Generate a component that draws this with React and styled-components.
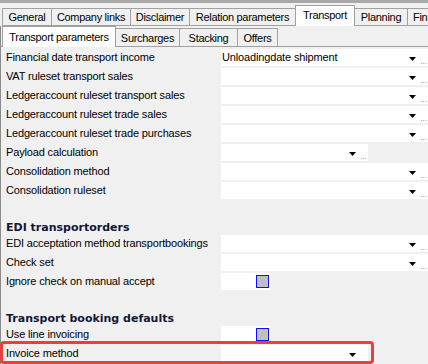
import React from 'react';
import styled, { createGlobalStyle } from 'styled-components';

const GlobalStyle = createGlobalStyle`
  html, body {
    margin: 0;
    padding: 0;
    background: #f0f0f0;
    overflow: hidden;
  }
  body {
    font-family: 'Liberation Sans', Arial, sans-serif;
    font-size: 11px;
    color: #000;
  }
`;

const mainTabs = [
  { name: 'General', width: 50 },
  { name: 'Company links', width: 80 },
  { name: 'Disclaimer', width: 60 },
  { name: 'Relation parameters', width: 107 },
  { name: 'Transport', width: 60, active: true },
  { name: 'Planning', width: 54 },
  { name: 'Financial', width: 60 },
];

const subTabs = [
  { name: 'Transport parameters', width: 114, active: true },
  { name: 'Surcharges', width: 65 },
  { name: 'Stacking', width: 59 },
  { name: 'Offers', width: 41 },
];

const transportRows = [
  { label: 'Financial date transport income', value: 'Unloadingdate shipment' },
  { label: 'VAT ruleset transport sales' },
  { label: 'Ledgeraccount ruleset transport sales' },
  { label: 'Ledgeraccount ruleset trade sales' },
  { label: 'Ledgeraccount ruleset trade purchases' },
  { label: 'Payload calculation', short: true },
  { label: 'Consolidation method' },
  { label: 'Consolidation ruleset' },
];

const Arrow = () => (
  <svg width="7" height="4" viewBox="0 0 7 4">
    <polygon points="0,0 7,0 3.5,4" fill="#000" />
  </svg>
);

const Combo = ({ value, short, noDots }) => (
  <Field $short={short}>
    <FieldText>{value}</FieldText>
    <ArrowWrap><Arrow /></ArrowWrap>
    {!noDots && <Dots>...</Dots>}
  </Field>
);

const Check = () => (
  <CheckField>
    <CheckBox />
  </CheckField>
);

const App = () => (
  <Window>
    <GlobalStyle />
    <TopBar />
    <MainTabRow>
      {mainTabs.map(t => (
        <MainTab key={t.name} $active={t.active} $width={t.width}>{t.name}</MainTab>
      ))}
    </MainTabRow>
    <Panel>
      <SubTabRow>
        {subTabs.map(t => (
          <SubTab key={t.name} $active={t.active} $width={t.width}>{t.name}</SubTab>
        ))}
      </SubTabRow>
      <Form>
        {transportRows.map(r => (
          <Row key={r.label}>
            <Label>{r.label}</Label>
            <Combo value={r.value} short={r.short} />
          </Row>
        ))}

        <Heading>EDI transportorders</Heading>
        <Row>
          <Label>EDI acceptation method transportbookings</Label>
          <Combo />
        </Row>
        <Row>
          <Label>Check set</Label>
          <Combo />
        </Row>
        <Row>
          <Label>Ignore check on manual accept</Label>
          <Check />
        </Row>

        <Heading>Transport booking defaults</Heading>
        <Row>
          <Label>Use line invoicing</Label>
          <Check />
        </Row>
        <Highlight>
          <Row>
            <Label>Invoice method</Label>
            <Combo short noDots />
          </Row>
        </Highlight>
      </Form>
    </Panel>
  </Window>
);

const Window = styled.div`
  width: 428px;
  height: 364px;
  overflow: hidden;
  background: #f0f0f0;
`;

const TopBar = styled.div`
  height: 3px;
  background: #a9a9a9;
`;

const MainTabRow = styled.div`
  display: flex;
  align-items: flex-end;
  height: 23px;
  padding-left: 2px;
  white-space: nowrap;
  overflow: hidden;
`;

const Tab = styled.div`
  flex: none;
  box-sizing: border-box;
  width: ${p => p.$width}px;
  display: flex;
  align-items: center;
  justify-content: center;
  overflow: hidden;
  background: ${p => (p.$active ? '#fff' : '#f0f0f0')};
  border: 1px solid #a0a0a0;
  margin-right: -1px;
  position: relative;
  z-index: ${p => (p.$active ? 1 : 0)};
  letter-spacing: -0.3px;
  white-space: nowrap;
`;

const MainTab = styled(Tab)`
  height: ${p => (p.$active ? 21 : 18)}px;
  padding-bottom: ${p => (p.$active ? 3 : 0)}px;
  border-bottom: ${p => (p.$active ? 'none' : '1px solid #a0a0a0')};
  &:last-child {
    justify-content: flex-start;
    padding-left: 5px;
  }
`;

const SubTab = styled(Tab)`
  height: ${p => (p.$active ? 21 : 18)}px;
  margin-bottom: ${p => (p.$active ? -1 : 0)}px;
  border-bottom: none;
`;

const Panel = styled.div`
  border-left: 1px solid #8a8a8a;
`;

const SubTabRow = styled.div`
  display: flex;
  align-items: flex-end;
  height: 20px;
  padding-left: 1px;
  border-bottom: 1px solid #a0a0a0;
`;

const Form = styled.div`
  display: flex;
  flex-direction: column;
  padding-left: 5px;
  padding-top: 2px;
`;

const Row = styled.div`
  display: flex;
  align-items: center;
  height: 17px;
  margin-bottom: 2px;
`;

const Label = styled.div`
  width: 215px;
  flex: none;
  white-space: nowrap;
  letter-spacing: -0.15px;
  padding-bottom: 2px;
`;

const Field = styled.div`
  position: relative;
  display: flex;
  align-items: center;
  box-sizing: border-box;
  width: ${p => (p.$short ? 147 : 207)}px;
  height: 17px;
  background: #fff;
  padding-left: 1px;
  flex: none;
`;

const FieldText = styled.span`
  flex: 1;
  white-space: nowrap;
  letter-spacing: -0.15px;
  padding-bottom: 2px;
`;

const ArrowWrap = styled.span`
  display: flex;
  margin-right: 12px;
  margin-top: 2px;
`;

const Dots = styled.span`
  position: absolute;
  right: 1px;
  bottom: 0;
  font-size: 8px;
  line-height: 8px;
  color: #777;
  letter-spacing: 0;
`;

const CheckField = styled.div`
  display: flex;
  align-items: center;
  justify-content: flex-end;
  width: 50px;
  height: 17px;
  background: #fff;
  padding-right: 2px;
  box-sizing: border-box;
`;

const CheckBox = styled.div`
  width: 13px;
  height: 13px;
  box-sizing: border-box;
  border: 1px solid #1010ff;
  background: #c0c0c0;
`;

const Heading = styled.div`
  margin-top: 19px;
  height: 15px;
  line-height: 15px;
  font-family: 'DejaVu Sans', Verdana, sans-serif;
  font-weight: bold;
  font-size: 11px;
  color: #111838;
`;

const Highlight = styled.div`
  position: relative;
  &::after {
    content: '';
    position: absolute;
    left: -6px;
    top: -4px;
    width: 374px;
    height: 23px;
    box-sizing: border-box;
    border: 3px solid #e8403e;
    border-radius: 4px;
    pointer-events: none;
  }
`;

export default App;
